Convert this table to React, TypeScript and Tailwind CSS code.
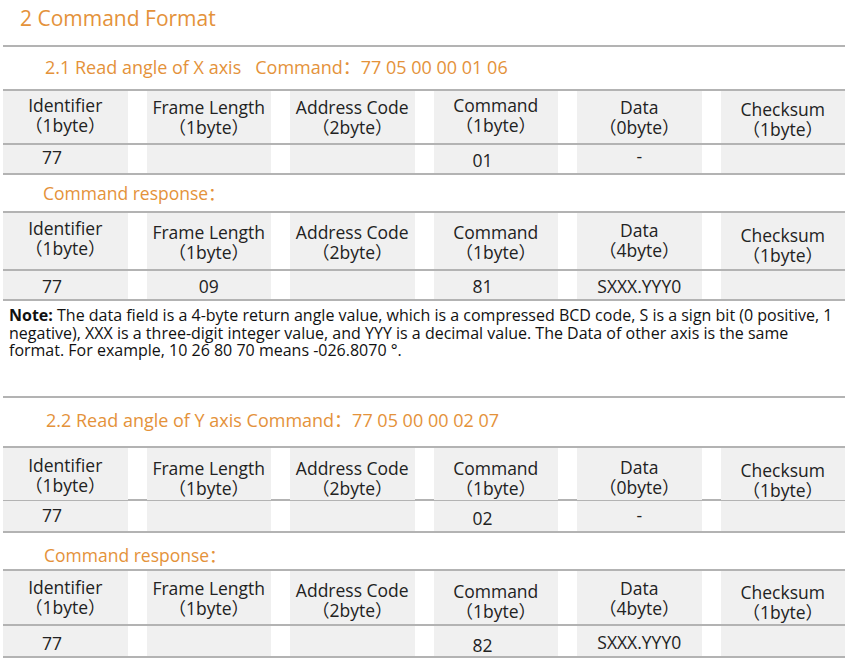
const font = { fontFamily: '"Open Sans", "Noto Sans CJK SC", sans-serif' }

type Head = { name: string; size: string; pt: string }
type Val = { text: string; pt: string }

const cols = ['Identifier', 'Frame Length', 'Address Code', 'Command', 'Data', 'Checksum']

function mkHead(sizes: string[], pts: string[]): Head[] {
  return cols.map((name, i) => ({ name, size: sizes[i], pt: pts[i] }))
}

const tables: { head: Head[]; vals: Val[]; headH: string; rowH: string }[] = [
  {
    head: mkHead(
      ['1byte', '1byte', '2byte', '1byte', '0byte', '1byte'],
      ['pt-[4px]', 'pt-[6px]', 'pt-[6px]', 'pt-[4px]', 'pt-[6px]', 'pt-[8px]'],
    ),
    vals: [
      { text: '77', pt: 'pt-[2px]' },
      { text: '', pt: '' },
      { text: '', pt: '' },
      { text: '01', pt: 'pt-[5px]' },
      { text: '-', pt: 'pt-[1px]' },
      { text: '', pt: '' },
    ],
    headH: 'h-[52px]',
    rowH: 'h-[28px]',
  },
  {
    head: mkHead(
      ['1byte', '1byte', '2byte', '1byte', '4byte', '1byte'],
      ['pt-[5px]', 'pt-[9px]', 'pt-[9px]', 'pt-[9px]', 'pt-[7px]', 'pt-[12px]'],
    ),
    vals: [
      { text: '77', pt: 'pt-[5px]' },
      { text: '09', pt: 'pt-[5px]' },
      { text: '', pt: '' },
      { text: '81', pt: 'pt-[5px]' },
      { text: 'SXXX.YYY0', pt: 'pt-[5px]' },
      { text: '', pt: '' },
    ],
    headH: 'h-[56px]',
    rowH: 'h-[28px]',
  },
  {
    head: mkHead(
      ['1byte', '1byte', '2byte', '1byte', '0byte', '1byte'],
      ['pt-[7px]', 'pt-[10px]', 'pt-[10px]', 'pt-[10px]', 'pt-[9px]', 'pt-[12px]'],
    ),
    vals: [
      { text: '77', pt: 'pt-[4px]' },
      { text: '', pt: '' },
      { text: '', pt: '' },
      { text: '02', pt: 'pt-[7px]' },
      { text: '-', pt: 'pt-[4px]' },
      { text: '', pt: '' },
    ],
    headH: 'h-[51px]',
    rowH: 'h-[30px]',
  },
  {
    head: mkHead(
      ['1byte', '1byte', '2byte', '1byte', '4byte', '1byte'],
      ['pt-[6px]', 'pt-[7px]', 'pt-[9px]', 'pt-[10px]', 'pt-[7px]', 'pt-[11px]'],
    ),
    vals: [
      { text: '77', pt: 'pt-[7px]' },
      { text: '', pt: '' },
      { text: '', pt: '' },
      { text: '82', pt: 'pt-[9px]' },
      { text: 'SXXX.YYY0', pt: 'pt-[6px]' },
      { text: '', pt: '' },
    ],
    headH: 'h-[53px]',
    rowH: 'h-[30px]',
  },
]

function Table({ t }: { t: (typeof tables)[number] }) {
  return (
    <div className="border-y-2 border-[#b3b3b3]">
      <div className={`grid grid-cols-6 gap-x-[19px] ${t.headH}`}>
        {t.head.map(h => (
          <div key={h.name} className={`bg-[#f0f0f0] text-center text-[17.5px] leading-[20px] text-[#222] ${h.pt}`}>
            <div>{h.name}</div>
            <div>（{h.size}）</div>
          </div>
        ))}
      </div>
      <div className="h-[2px] bg-[#b3b3b3]" />
      <div className={`grid grid-cols-6 gap-x-[19px] ${t.rowH}`}>
        {t.vals.map((v, i) => (
          <div
            key={i}
            className={`bg-[#f0f0f0] text-[17.5px] leading-[20px] text-[#222] ${v.pt} ${i === 0 || i === 3 ? 'pl-[39px]' : 'text-center'}`}
          >
            {v.text}
          </div>
        ))}
      </div>
    </div>
  )
}

export default function App() {
  return (
    <div className="w-[852px] h-[664px] bg-white overflow-hidden" style={font}>
      <div className="ml-[3px] w-[842px]">
        <div className="h-[47px] border-b-2 border-[#b3b3b3] pl-[17px] pt-[4px] text-[21px] leading-[28px] text-[#e4923a]">
          2 Command Format
        </div>

        <div className="h-[42px] pt-[8px] pl-[42px] text-[18px] leading-[24px] text-[#e4923a] whitespace-pre">
          2.1 Read angle of X axis   Command：77 05 00 00 01 06
        </div>
        <Table t={tables[0]} />

        <div className="h-[36px] pt-[6px] pl-[40px] text-[17.5px] leading-[24px] text-[#e4923a]">
          Command response：
        </div>
        <Table t={tables[1]} />

        <div className="h-[95px] pt-[6px] pl-[6px] text-[16px] leading-[17.5px] text-[#111] whitespace-nowrap">
          <div>
            <b>Note:</b> The data field is a 4-byte return angle value, which is a compressed BCD code, S is a sign bit (0 positive, 1
          </div>
          <div>negative), XXX is a three-digit integer value, and YYY is a decimal value. The Data of other axis is the same</div>
          <div>format. For example, 10 26 80 70 means -026.8070 °.</div>
        </div>

        <div className="h-[50px] border-t-2 border-[#b3b3b3] pt-[10px] pl-[43px] text-[18px] leading-[24px] text-[#e4923a]">
          2.2 Read angle of Y axis Command：77 05 00 00 02 07
        </div>
        <Table t={tables[2]} />

        <div className="h-[36px] pt-[10px] pl-[41px] text-[17.5px] leading-[24px] text-[#e4923a]">
          Command response：
        </div>
        <Table t={tables[3]} />
      </div>
    </div>
  )
}
